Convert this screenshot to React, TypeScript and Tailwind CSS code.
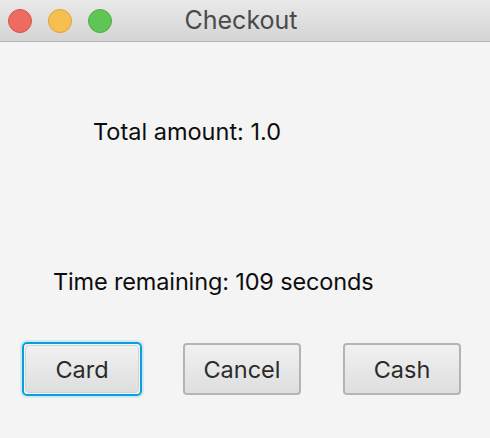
import React from 'react';

function TrafficLight({ color, border }: { color: string; border: string }) {
  return <span className={`block h-6 w-6 rounded-full border ${color} ${border}`} />;
}

function DialogButton({ label, focused = false }: { label: string; focused?: boolean }) {
  return (
    <div
      className={`flex h-[54px] w-[120px] items-center justify-center rounded-[5px] ${
        focused ? 'border-2 border-[#0f9dd9] p-px shadow-[0_0_0_2px_#cfe9f5]' : 'p-px'
      }`}
    >
      <button
        className={`flex h-full w-full items-center justify-center rounded-[4px] border bg-gradient-to-b from-[#f1f1f1] to-[#dedede] pt-[2px] text-[23.5px] text-[#2b2b2b] ${
          focused ? 'border-[#c9d6dc]' : 'border-[#b4b4b4] border-2'
        }`}
      >
        {label}
      </button>
    </div>
  );
}

export default function App() {
  return (
    <div className="flex h-[438px] w-[490px] flex-col bg-[#f4f4f4] font-['Inter',sans-serif]">
      {/* Title bar */}
      <div className="relative flex h-[42px] items-center border-b border-[#b3b3b3] bg-gradient-to-b from-[#e9e9e9] to-[#d4d4d4]">
        <div className="flex gap-4 pl-2">
          <TrafficLight color="bg-[#ee6b60]" border="border-[#d9534a]" />
          <TrafficLight color="bg-[#f6bf4f]" border="border-[#dea23a]" />
          <TrafficLight color="bg-[#61c555]" border="border-[#4ead43]" />
        </div>
        <div className="absolute inset-0 flex items-center justify-center pr-[8px] text-[25px] text-[#4a4a4a]">
          Checkout
        </div>
      </div>

      {/* Body */}
      <div className="flex flex-1 flex-col text-[23.5px] text-[#0d0d0d]">
        <div className="pl-[93px] pt-[78px] leading-6">Total amount: 1.0</div>
        <div className="pl-[53px] pt-[126px] leading-6 tracking-[-0.15px]">Time remaining: 109 seconds</div>
        <div className="flex gap-10 pl-[22px] pt-[48px]">
          <DialogButton label="Card" focused />
          <DialogButton label="Cancel" />
          <DialogButton label="Cash" />
        </div>
      </div>
    </div>
  );
}
